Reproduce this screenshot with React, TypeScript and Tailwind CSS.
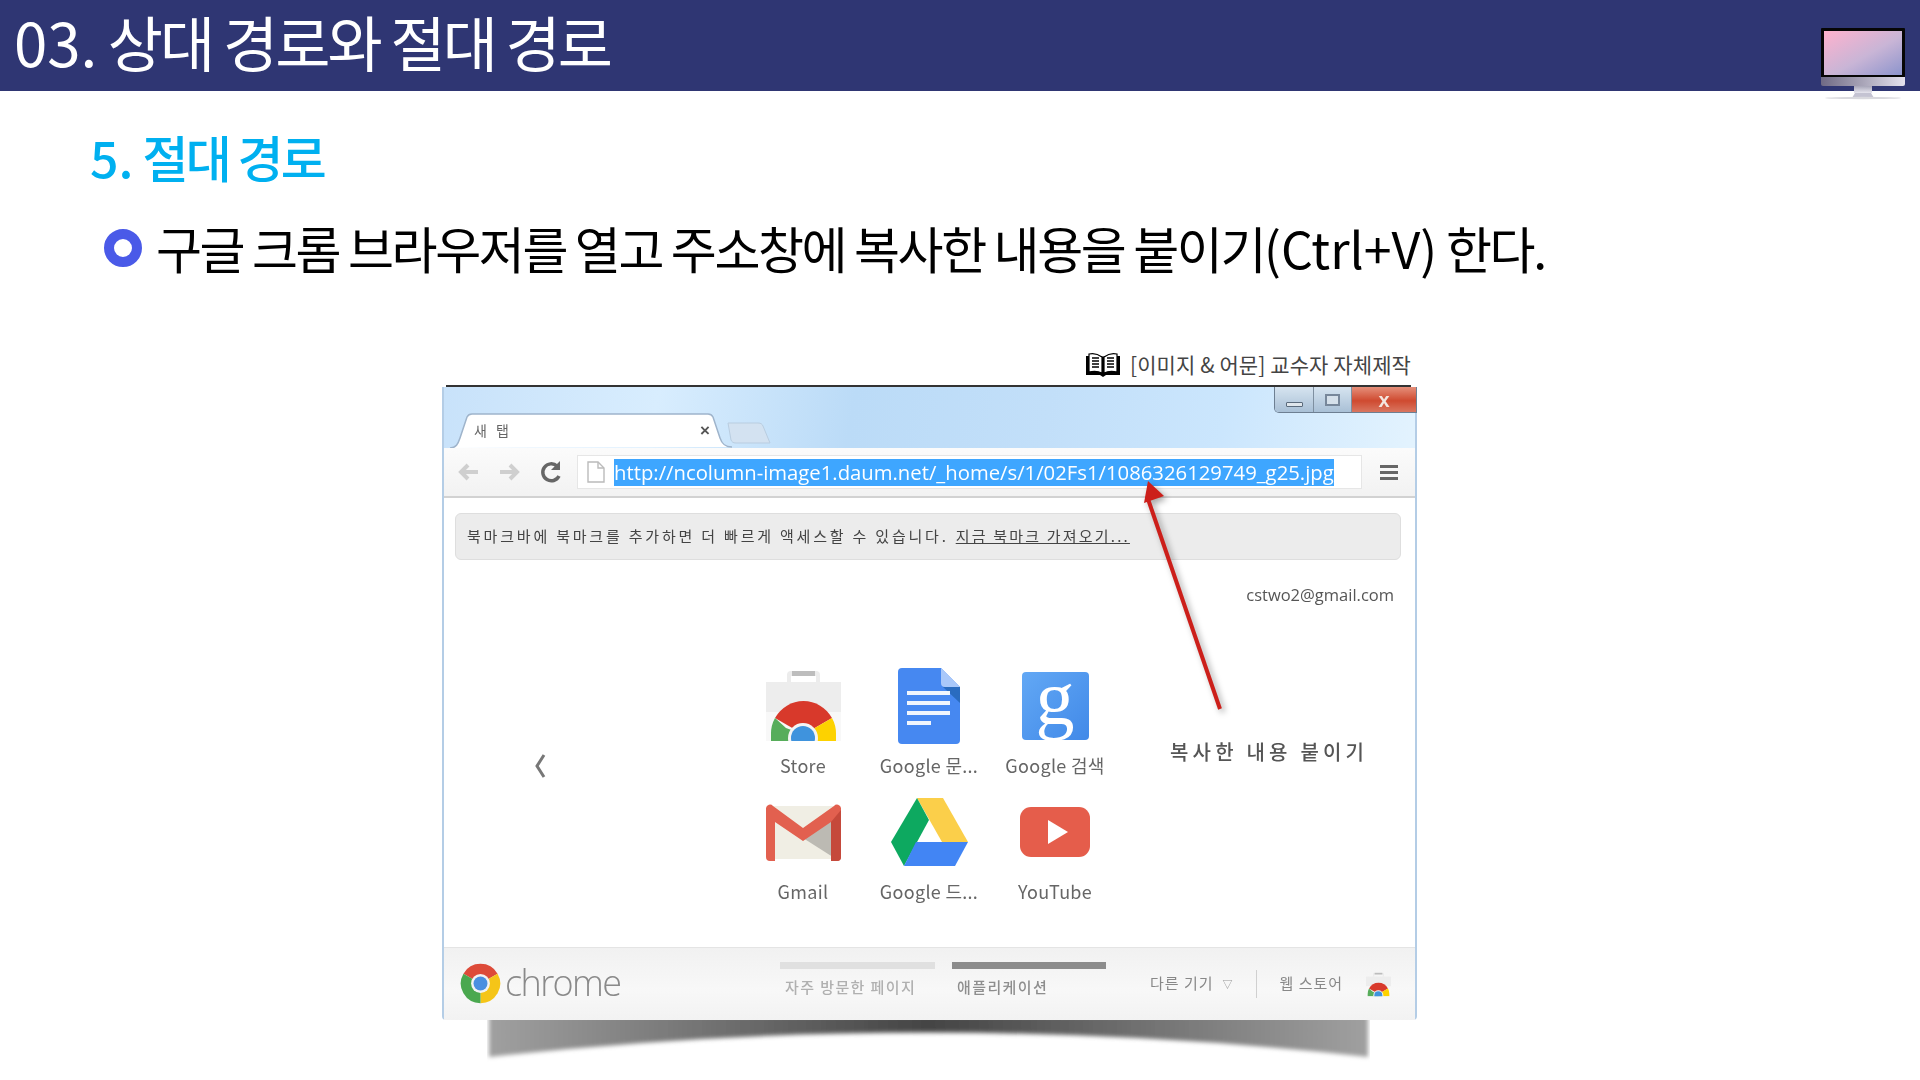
import { Fragment } from "react";

const KR = "font-['Noto_Sans_CJK_KR','Noto_Sans',sans-serif]";

function Monitor() {
  return (
    <svg width="90" height="74" viewBox="0 0 90 74" className="absolute left-[1819px] top-[27px]">
      <defs>
        <linearGradient id="scr" x1="0" y1="0" x2="1" y2="1">
          <stop offset="0" stopColor="#ffb2ce" />
          <stop offset="0.55" stopColor="#c9b5d6" />
          <stop offset="1" stopColor="#8c94cc" />
        </linearGradient>
        <linearGradient id="chin" x1="0" y1="0" x2="1" y2="0">
          <stop offset="0" stopColor="#6f6a85" />
          <stop offset="0.5" stopColor="#a9a5b8" />
          <stop offset="1" stopColor="#e4e2ee" />
        </linearGradient>
        <linearGradient id="stand" x1="0" y1="0" x2="0" y2="1">
          <stop offset="0" stopColor="#a7a5b8" />
          <stop offset="1" stopColor="#e6e5ee" />
        </linearGradient>
      </defs>
      <rect x="2" y="1" width="84" height="50" rx="1" fill="#060606" />
      <rect x="5" y="4" width="78" height="44" fill="url(#scr)" />
      <path d="M2 50H86V57a2 2 0 0 1-2 2H4a2 2 0 0 1-2-2Z" fill="url(#chin)" />
      <path d="M35 59H53V66H35Z" fill="url(#stand)" />
      <path d="M33 71L36 66H52L55 71Z" fill="#c4c3d2" />
      <ellipse cx="44" cy="71" rx="38" ry="1.2" fill="#d9d9de" />
    </svg>
  );
}

function BookIcon() {
  return (
    <svg width="36" height="26" viewBox="0 0 36 26" className="shrink-0">
      <path d="M1 4H17L18 5L19 4H35V23H21L18 25L15 23H1Z" fill="#000" />
      <path d="M4 2C8 1 13 2 17 5V21C13 19 8 19 4 20ZM32 2C28 1 23 2 19 5V21C23 19 28 19 32 20Z" fill="#fff" stroke="#000" strokeWidth="1.2" />
      <path d="M7 6H14M7 9H14M7 12H14M7 15H14M22 6H29M22 9H29M22 12H29M22 15H29" stroke="#000" strokeWidth="1.4" />
    </svg>
  );
}

function ChromeBall({ size }: { size: number }) {
  return (
    <svg width={size} height={size} viewBox="0 0 100 100" className="shrink-0">
      <path d="M50 50L8.4 26A48 48 0 0 1 91.6 26Z" fill="#dd4b39" />
      <path d="M50 50L91.6 26A48 48 0 0 1 50 98Z" fill="#f5c518" />
      <path d="M50 50L50 98A48 48 0 0 1 8.4 26Z" fill="#4aa84f" />
      <circle cx="50" cy="50" r="23" fill="#f2f2f2" />
      <circle cx="50" cy="50" r="17" fill="#4a8fe0" />
    </svg>
  );
}

function StoreIcon({ w, h }: { w: number; h: number }) {
  return (
    <svg width={w} height={h} viewBox="0 0 75 72">
      <defs>
        <clipPath id="bagclip">
          <rect x="0" y="0" width="75" height="71" />
        </clipPath>
      </defs>
      <path d="M21 13V5a4 4 0 0 1 4-4H50a4 4 0 0 1 4 4V13H50V6H25V13Z" fill="#ececec" />
      <rect x="26" y="1" width="23" height="5" fill="#bdbdbd" />
      <rect x="0" y="12" width="75" height="30" fill="#ededed" />
      <rect x="0" y="42" width="75" height="29" fill="#f8f8f8" />
      <g clipPath="url(#bagclip)">
        <path d="M37.5 64.5L9 48A32.5 32.5 0 0 1 66 48Z" fill="#d8392b" />
        <path d="M37.5 64.5L66 48A32.5 32.5 0 0 1 70 64.5V72H37.5Z" fill="#fdd200" />
        <path d="M37.5 64.5V72H5V64.5A32.5 32.5 0 0 1 9 48L20 58Z" fill="#57ad5b" />
        <circle cx="37" cy="68" r="15" fill="#f4f4f4" />
        <circle cx="37" cy="68" r="12" fill="#3f93dd" />
      </g>
    </svg>
  );
}

function DocsIcon() {
  return (
    <svg width="62" height="76" viewBox="0 0 62 76">
      <path d="M4 0H43L62 19V72a4 4 0 0 1-4 4H4a4 4 0 0 1-4-4V4a4 4 0 0 1 4-4Z" fill="#4688f1" />
      <path d="M43 0L62 19H47a4 4 0 0 1-4-4Z" fill="#a9c8fa" />
      <path d="M45 19H62V35Z" fill="#2a6cc0" />
      <path d="M9 25H52M9 35H52M9 45H52M9 55H33" stroke="#fff" strokeWidth="4" opacity="0.92" />
    </svg>
  );
}

function GmailIcon() {
  return (
    <svg width="75" height="57" viewBox="0 0 75 57">
      <rect x="2" y="2" width="71" height="53" fill="#f0eee4" />
      <path d="M37 34L70 55H70V12Z" fill="#bcbab3" />
      <path d="M0 4a4 4 0 0 1 7-2L37 24L68 2a4 4 0 0 1 7 2V53a4 4 0 0 1-4 4H65V18L37 37L9 18V57H4a4 4 0 0 1-4-4Z" fill="#e2604f" />
      <path d="M65 18L75 6V53a4 4 0 0 1-4 4H65Z" fill="#c5493b" />
    </svg>
  );
}

function DriveIcon() {
  return (
    <svg width="77" height="68" viewBox="0 0 77 68">
      <path d="M26 0H52L77 44H51Z" fill="#fbcf4a" />
      <path d="M26 0L38 22L13 68L0 44Z" fill="#0da960" />
      <path d="M25 44H77L64 68H13Z" fill="#4285f4" />
    </svg>
  );
}

function YoutubeIcon() {
  return (
    <svg width="70" height="50" viewBox="0 0 70 50">
      <rect x="0" y="0" width="70" height="50" rx="11" fill="#e55d4b" />
      <path d="M28 13L48 25L28 37Z" fill="#fff" />
    </svg>
  );
}

function GoogleIcon() {
  return (
    <div className="w-[67px] h-[68px] rounded-[4px] bg-[linear-gradient(135deg,#62a8f5,#4189e8)] flex items-center justify-center text-white text-[78px] leading-none pb-[16px] font-['Liberation_Serif',serif]">
      g
    </div>
  );
}

const apps = [
  { name: "Store", icon: <StoreIcon w={75} h={72} /> },
  { name: "Google 문...", icon: <DocsIcon /> },
  { name: "Google 검색", icon: <GoogleIcon /> },
  { name: "Gmail", icon: <GmailIcon /> },
  { name: "Google 드...", icon: <DriveIcon /> },
  { name: "YouTube", icon: <YoutubeIcon /> },
];

function WindowControls() {
  return (
    <div className="absolute right-[-2px] top-0 h-[26px] w-[143px] flex rounded-bl-[5px] overflow-hidden border border-t-0 border-[#6d7f92]">
      <div className="w-[39px] border-r border-[#7e8fa0] bg-[linear-gradient(#d6e4f0,#a9c0d6)] flex items-end justify-center pb-[5px]">
        <div className="w-[17px] h-[5px] rounded-[1px] bg-[#dfe6ec] border border-[#5b6b7c]" />
      </div>
      <div className="w-[38px] border-r border-[#7e8fa0] bg-[linear-gradient(#d6e4f0,#a9c0d6)] flex items-center justify-center">
        <div className="w-[15px] h-[12px] border-2 border-[#77879a] bg-[#d5e0ea]" />
      </div>
      <div className="flex-1 bg-[linear-gradient(#e58f7a,#cf4a30_55%,#d97660)] flex items-center justify-center text-[#f3e6e0] text-[20px] leading-none font-bold font-['Liberation_Sans',sans-serif]">
        x
      </div>
    </div>
  );
}

function Tab() {
  return (
    <div className="relative h-[35px] w-[282px] ml-[6px] flex items-center pl-[24px] pr-[22px]">
      <svg width="282" height="35" viewBox="0 0 282 35" className="absolute inset-0">
        <path d="M0 35C6 35 8 31 10 25L17 4C18 2 19 1 22 1H258C261 1 262 2 263 4L270 25C272 31 275 34 282 34" fill="#fff" stroke="#9fb4cb" strokeWidth="1.5" />
      </svg>
      <span className={`relative text-[14px] tracking-[3px] text-[#666] ${KR}`}>새 탭</span>
      <span className="relative ml-auto text-[#555] text-[17px] leading-none font-bold font-['Liberation_Sans',sans-serif]">×</span>
    </div>
  );
}

function Toolbar() {
  return (
    <div className="h-[50px] bg-[linear-gradient(#fbfbfb,#f2f2f2)] border-b-2 border-[#d2d2d2] flex items-center pl-[12px]">
      <svg width="120" height="30" viewBox="0 0 120 30" className="shrink-0">
        <path d="M22 15H5M12 8L5 15L12 22" fill="none" stroke="#cfcfcf" strokeWidth="4" />
        <path d="M44 15H61M54 8L61 15L54 22" fill="none" stroke="#cfcfcf" strokeWidth="4" />
        <path d="M103 19A8.5 8.5 0 1 1 101 9" fill="none" stroke="#666" strokeWidth="3.5" />
        <path d="M104 4V13H95Z" fill="#666" />
      </svg>
      <div className="ml-[1px] w-[785px] h-[34px] bg-white border border-[#e6e6e6] flex items-center">
        <svg width="36" height="24" viewBox="0 0 36 24" className="shrink-0">
          <path d="M10 2H20L26 8V22H10Z" fill="#fff" stroke="#bbb" strokeWidth="1.4" />
          <path d="M20 2V8H26" fill="none" stroke="#bbb" strokeWidth="1.4" />
        </svg>
        <span className="bg-[#3ea6ff] text-white text-[20.3px] leading-[27px] whitespace-nowrap font-['Open_Sans',sans-serif]">
          http://ncolumn-image1.daum.net/_home/s/1/02Fs1/1086326129749_g25.jpg
        </span>
      </div>
      <div className="ml-[18px] w-[18px] flex flex-col gap-[3px]">
        <div className="h-[3px] bg-[#666]" />
        <div className="h-[3px] bg-[#666]" />
        <div className="h-[3px] bg-[#666]" />
      </div>
    </div>
  );
}

function Content() {
  return (
    <div className="h-[449px] bg-white flex flex-col">
      <div className={`ml-[11px] mt-[15px] w-[946px] h-[47px] rounded-[6px] bg-[#ececec] border border-[#dedede] flex items-center pl-[11px] text-[15px] text-[#444] whitespace-nowrap ${KR}`}>
        <span className="tracking-[2.8px]">북마크바에 북마크를 추가하면 더 빠르게 액세스할 수 있습니다.</span>
        <span className="ml-[7px] underline tracking-[2.2px]">지금 북마크 가져오기...</span>
      </div>
      <div className="mt-[23px] h-[24px] pr-[21px] flex items-center justify-end text-[16.5px] text-[#555] font-['Open_Sans',sans-serif]">
        cstwo2@gmail.com
      </div>
      <div className="mt-[53px] flex">
        <div className="w-[296px] pl-[88px] pt-[93px]">
          <svg width="16" height="26" viewBox="0 0 16 26">
            <path d="M12 2L5 13L12 24" fill="none" stroke="#777" strokeWidth="3" />
          </svg>
        </div>
        <div className="grid grid-cols-[126px_126px_126px] grid-rows-[126px_126px]">
          {apps.map((a) => (
            <Fragment key={a.name}>
              <div className="flex flex-col items-center">
                <div className="h-[92px] flex items-center justify-center">{a.icon}</div>
                <div className={`h-[26px] leading-[26px] text-[18px] tracking-[0.3px] text-[#666] whitespace-nowrap ${KR}`}>{a.name}</div>
              </div>
            </Fragment>
          ))}
        </div>
        <div className={`ml-[52px] mt-[79px] h-[26px] leading-[26px] text-[20px] font-medium tracking-[4.2px] text-[#555] whitespace-nowrap ${KR}`}>
          복사한 내용 붙이기
        </div>
      </div>
    </div>
  );
}

function Footer() {
  return (
    <div className={`h-[73px] bg-[linear-gradient(#f1f1f1,#f8f8f8_60%,#f2f2f2)] border-t border-[#e4e4e4] flex ${KR}`}>
      <div className="w-[336px] pl-[16px] pt-[15px] flex items-start">
        <ChromeBall size={41} />
        <span className="ml-[4px] text-[36px] leading-[40px] text-[#8a8a8a] font-['Open_Sans',sans-serif] font-light tracking-[-1.6px]">chrome</span>
      </div>
      <div className="pt-[14px] flex gap-[17px] text-[15px] font-medium">
        <div className="w-[155px]">
          <div className="h-[7px] bg-[#e0e0e0]" />
          <div className="mt-[7px] pl-[5px] leading-[22px] tracking-[1.4px] text-[#b0b0b0] whitespace-nowrap">자주 방문한 페이지</div>
        </div>
        <div className="w-[154px]">
          <div className="h-[7px] bg-[#8c8c8c]" />
          <div className="mt-[7px] pl-[5px] leading-[22px] tracking-[1.4px] text-[#8e8e8e] whitespace-nowrap">애플리케이션</div>
        </div>
      </div>
      <div className="ml-[44px] flex items-center h-[70px] text-[15px] text-[#888] whitespace-nowrap pt-[1px] tracking-[1px]">
        <span>다른 기기</span>
        <span className="ml-[9px] text-[10px] text-[#999]">▽</span>
        <div className="ml-[22px] w-px h-[28px] bg-[#d0d0d0]" />
        <span className="ml-[23px]">웹 스토어</span>
        <div className="ml-[23px] mt-[2px]">
          <StoreIcon w={25} h={25} />
        </div>
      </div>
    </div>
  );
}

export default function App() {
  return (
    <div className={`relative w-[1920px] h-[1080px] overflow-hidden bg-white ${KR}`}>
      <header className="h-[91px] bg-[#2f3673] flex items-center pl-[14px] pb-[9px]">
        <h1 className="text-[60px] leading-[76px] text-white font-normal whitespace-nowrap tracking-[-2.9px]">
          <span className="tracking-[0px]">03.</span> 상대 경로와 절대 경로
        </h1>
      </header>
      <Monitor />

      <div className="mt-[35px] h-[60px] pl-[90px] flex items-center text-[50px] font-medium text-[#00b0f0] tracking-[-2.7px] whitespace-nowrap">
        <span className="tracking-[0px] mr-[9px]">5.</span>
        <span>절대 경로</span>
      </div>

      <div className="mt-[32px] h-[60px] pl-[104px] flex items-center whitespace-nowrap">
        <div className="w-[38px] h-[38px] rounded-full border-[10px] border-[#4a5ae8] bg-white shrink-0" />
        <span className="ml-[14px] pb-[2px] text-[50px] text-black tracking-[-2.4px]">
          구글 크롬 브라우저를 열고 주소창에 복사한 내용을 붙이기<span className="tracking-[0px]">(Ctrl+V)</span> 한다.
        </span>
      </div>

      <div className="mt-[72px] h-[30px] w-[1411px] flex items-center justify-end text-[21px] text-[#444] whitespace-nowrap">
        <BookIcon />
        <span className="ml-[9px] tracking-[0.1px]">[이미지 &amp; 어문] 교수자 자체제작</span>
      </div>

      <div className="mt-[5px] ml-[446px] w-[965px] h-[2px] bg-[#333]" />

      <div className="relative ml-[442px] w-[975px] h-[633px] blur-[0.4px] border-x-2 border-b-2 border-[#b4cde6] rounded-b-[4px]">
        <div className="relative h-[61px] flex items-end bg-[linear-gradient(100deg,#c8e2fa,#d8edfe_22%,#bbdbf7_42%,#c2dff9_62%,#cbe6fd_80%,#e3f3fe)]">
          <Tab />
          <svg width="48" height="24" viewBox="0 0 48 24" className="mb-[3px] ml-[-6px]">
            <path d="M2 2H32C35 2 36 3 37 5L44 22H10C7 22 6 21 5 19Z" fill="#d3e2f1" stroke="#b9cde0" />
          </svg>
          <WindowControls />
        </div>
        <Toolbar />
        <Content />
        <Footer />
        <svg width="100" height="240" viewBox="0 0 100 240" className="absolute left-[690px] top-[90px] drop-shadow-[3px_3px_3px_rgba(0,0,0,0.35)]">
          <path d="M14 22L86 232" stroke="#cc1f1a" strokeWidth="4" />
          <path d="M14 4L10 26L30 19Z" fill="#cc1f1a" />
        </svg>
      </div>

      <svg width="883" height="42" viewBox="0 0 883 42" className="ml-[487px]">
        <defs>
          <linearGradient id="shade" x1="0" y1="0" x2="1" y2="0">
            <stop offset="0" stopColor="#a0a0a0" />
            <stop offset="0.5" stopColor="#444" />
            <stop offset="1" stopColor="#a0a0a0" />
          </linearGradient>
          <filter id="soft">
            <feGaussianBlur stdDeviation="2" />
          </filter>
        </defs>
        <path d="M2 -4H881V37Q441 -12 2 37Z" fill="url(#shade)" filter="url(#soft)" />
      </svg>
    </div>
  );
}
